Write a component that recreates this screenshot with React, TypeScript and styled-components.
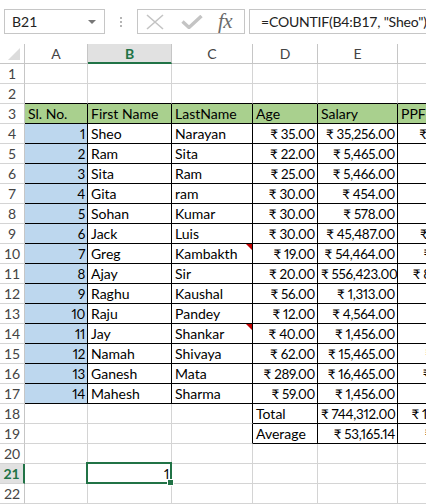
import styled, { createGlobalStyle } from 'styled-components';

const GlobalStyle = createGlobalStyle`
  html, body {
    margin: 0;
    padding: 0;
    background: #fff;
  }
  body {
    font-family: Lato, 'Liberation Sans', 'Noto Sans', sans-serif;
  }
`;

const GREEN = '#217346';
const GRID = '#d4d4d4';
const HEAD_LINE = '#c6c6c6';
const COLS = [63, 84, 81, 65, 80, 86];
const LETTERS = ['A', 'B', 'C', 'D', 'E', 'F'];
const ROW_COUNT = 22;
const SELECTED_ROW = 21;
const SELECTED_COL = 2;

type Cell = { v: string; num?: boolean; fill?: string; note?: boolean };

const people: [number, string, string, number, number][] = [
  [1, 'Sheo', 'Narayan', 35, 35256],
  [2, 'Ram', 'Sita', 22, 5465],
  [3, 'Sita', 'Ram', 25, 5466],
  [4, 'Gita', 'ram', 30, 454],
  [5, 'Sohan', 'Kumar', 30, 578],
  [6, 'Jack', 'Luis', 30, 45487],
  [7, 'Greg', 'Kambakth', 19, 54464],
  [8, 'Ajay', 'Sir', 20, 556423],
  [9, 'Raghu', 'Kaushal', 56, 1313],
  [10, 'Raju', 'Pandey', 12, 4564],
  [11, 'Jay', 'Shankar', 40, 1456],
  [12, 'Namah', 'Shivaya', 62, 15465],
  [13, 'Ganesh', 'Mata', 289, 16465],
  [14, 'Mahesh', 'Sharma', 59, 1456]
];

const money = (n: number) => {
  const [int, dec] = n.toFixed(2).split('.');
  return '₹ ' + int.replace(/\B(?=(\d{3})+(?!\d))/g, ',') + '.' + dec;
};

const notes = ['Kambakth', 'Shankar'];

const buildRows = (): Record<number, Record<number, Cell>> => {
  const rows: Record<number, Record<number, Cell>> = {};
  const head = ['Sl. No.', 'First Name', 'LastName', 'Age', 'Salary', 'PPF'];
  rows[3] = {};
  head.forEach((h, i) => (rows[3][i + 1] = { v: h, fill: '#a9d08e' }));
  people.forEach((p, i) => {
    rows[4 + i] = {
      1: { v: String(p[0]), num: true, fill: '#bdd7ee' },
      2: { v: p[1] },
      3: { v: p[2], note: notes.includes(p[2]) },
      4: { v: money(p[3]), num: true },
      5: { v: money(p[4]), num: true },
      6: { v: money(p[4] * 0.15), num: true }
    };
  });
  const total = people.reduce((s, p) => s + p[4], 0);
  rows[18] = {
    4: { v: 'Total' },
    5: { v: money(total), num: true },
    6: { v: money(total * 0.15), num: true }
  };
  rows[19] = {
    4: { v: 'Average' },
    5: { v: money(total / people.length), num: true },
    6: { v: money((total * 0.15) / people.length), num: true }
  };
  rows[21] = { 2: { v: '1', num: true } };
  return rows;
};

const bordered = (r: number, c: number) =>
  (r >= 3 && r <= 17 && c >= 1 && c <= 6) || (r >= 18 && r <= 19 && c >= 4 && c <= 6);

const App = () => {
  const rows = buildRows();
  const lines = Array.from({ length: ROW_COUNT }, (_, i) => i + 1);

  return (
    <>
      <GlobalStyle />
      <Window>
        <FormulaBar>
          <NameBox>
            B21
            <DropArrow />
          </NameBox>
          <Grip>
            <i />
            <i />
            <i />
          </Grip>
          <ActionBox>
            <svg width='20' height='16' viewBox='0 0 20 16'>
              <path d='M2 1 L18 15 M18 1 L2 15' stroke='#c4c4c4' strokeWidth='1.6' fill='none' />
            </svg>
            <svg width='22' height='14' viewBox='0 0 22 14'>
              <path d='M1.5 6.5 L8 12.5 L20.5 1' stroke='#c4c4c4' strokeWidth='3.4' fill='none' />
            </svg>
            <Fx>fx</Fx>
          </ActionBox>
          <FormulaInput>=COUNTIF(B4:B17, "Sheo")</FormulaInput>
        </FormulaBar>

        <Sheet>
          <Corner>
            <svg width='12' height='12' viewBox='0 0 12 12'>
              <path d='M12 0 L12 12 L0 12 Z' fill='#dcdcdc' />
            </svg>
          </Corner>
          {LETTERS.map((l, i) => (
            <ColHead key={l} $active={i + 1 === SELECTED_COL}>
              {l}
            </ColHead>
          ))}

          {lines.map((r) => (
            <Row key={r}>
              <RowHead $active={r === SELECTED_ROW}>{r}</RowHead>
              {COLS.map((_, ci) => {
                const c = ci + 1;
                const cell = rows[r]?.[c];
                const right = bordered(r, c) || bordered(r, c + 1) ? '#000' : GRID;
                const bottom = bordered(r, c) || bordered(r + 1, c) ? '#000' : GRID;
                const selected = r === SELECTED_ROW && c === SELECTED_COL;
                return (
                  <DataCell
                    key={c}
                    $right={right}
                    $bottom={bottom}
                    $fill={cell?.fill}
                    $selected={selected}
                  >
                    <CellText $num={cell?.num}>{cell?.v}</CellText>
                    {cell?.note && <NoteMark />}
                    {selected && (
                      <Selection>
                        <FillHandle />
                      </Selection>
                    )}
                  </DataCell>
                );
              })}
            </Row>
          ))}
        </Sheet>
      </Window>
    </>
  );
};

export default App;

const Window = styled.div`
  width: 426px;
  height: 504px;
  overflow: hidden;
  background: #fff;
  color: #000;
`;

const FormulaBar = styled.div`
  height: 44px;
  display: flex;
  align-items: flex-start;
  padding: 9px 0 0 4px;
  box-sizing: border-box;
`;

const NameBox = styled.div`
  position: relative;
  width: 101px;
  height: 25px;
  box-sizing: border-box;
  border: 1px solid ${HEAD_LINE};
  padding-left: 7px;
  font-size: 14px;
  line-height: 23px;
  color: #222;
`;

const DropArrow = styled.span`
  position: absolute;
  right: 8px;
  top: 10px;
  width: 0;
  height: 0;
  border-left: 4px solid transparent;
  border-right: 4px solid transparent;
  border-top: 4px solid #777;
`;

const Grip = styled.div`
  width: 32px;
  height: 25px;
  display: flex;
  flex-direction: column;
  align-items: center;
  justify-content: center;
  gap: 2px;

  i {
    width: 2px;
    height: 2px;
    background: #b5b5b5;
  }
`;

const ActionBox = styled.div`
  width: 108px;
  height: 25px;
  box-sizing: border-box;
  border: 1px solid ${HEAD_LINE};
  display: flex;
  align-items: center;
  padding-left: 7px;
  gap: 16px;
`;

const Fx = styled.span`
  font-family: 'Liberation Serif', 'DejaVu Serif', serif;
  font-style: italic;
  font-size: 21px;
  color: #6b6b6b;
  margin-left: -1px;
  letter-spacing: -0.5px;
`;

const FormulaInput = styled.div`
  flex: 1;
  margin-left: 4px;
  height: 25px;
  box-sizing: border-box;
  border: 1px solid ${HEAD_LINE};
  border-right: none;
  padding-left: 11px;
  font-size: 14px;
  letter-spacing: -0.2px;
  line-height: 23px;
  color: #222;
  white-space: nowrap;
  overflow: hidden;
`;

const Sheet = styled.div`
  display: grid;
  grid-template-columns: 25px ${COLS.map((w) => w + 'px').join(' ')};
  grid-auto-rows: 20px;
  width: max-content;
`;

const Row = styled.div`
  display: contents;
`;

const Corner = styled.div`
  box-sizing: border-box;
  border-right: 1px solid ${HEAD_LINE};
  border-bottom: 1px solid ${HEAD_LINE};
  display: flex;
  align-items: flex-end;
  justify-content: flex-end;
  padding: 0 4px 3px 0;
`;

const ColHead = styled.div<{ $active?: boolean }>`
  box-sizing: border-box;
  border-right: 1px solid ${HEAD_LINE};
  border-bottom: ${(p) => (p.$active ? `2px solid ${GREEN}` : `1px solid ${HEAD_LINE}`)};
  background: ${(p) => (p.$active ? '#e1e1e1' : '#fff')};
  color: ${(p) => (p.$active ? GREEN : '#444')};
  font-weight: ${(p) => (p.$active ? 700 : 400)};
  font-size: 14px;
  text-align: center;
  line-height: 19px;
`;

const RowHead = styled.div<{ $active?: boolean }>`
  box-sizing: border-box;
  border-right: ${(p) => (p.$active ? `2px solid ${GREEN}` : `1px solid ${HEAD_LINE}`)};
  border-bottom: 1px solid ${GRID};
  background: ${(p) => (p.$active ? '#e1e1e1' : '#fff')};
  color: ${(p) => (p.$active ? GREEN : '#444')};
  font-weight: ${(p) => (p.$active ? 700 : 400)};
  font-size: 14px;
  text-align: center;
  line-height: 20px;
`;

const DataCell = styled.div<{ $right: string; $bottom: string; $fill?: string; $selected?: boolean }>`
  position: relative;
  z-index: ${(p) => (p.$selected ? 2 : 'auto')};
  box-sizing: border-box;
  border-right: 1px solid ${(p) => p.$right};
  border-bottom: 1px solid ${(p) => p.$bottom};
  background: ${(p) => p.$fill ?? '#fff'};
  min-width: 0;
`;

const CellText = styled.div<{ $num?: boolean }>`
  padding: 0 ${(p) => (p.$num ? '2px' : '3px')} 0 3px;
  font-size: ${(p) => (p.$num ? '13.4px' : '14px')};
  line-height: 20px;
  white-space: nowrap;
  overflow: hidden;
  text-align: ${(p) => (p.$num ? 'right' : 'left')};
  direction: ${(p) => (p.$num ? 'rtl' : 'ltr')};
  unicode-bidi: plaintext;
  font-variant-numeric: proportional-nums;
  letter-spacing: ${(p) => (p.$num ? '-0.3px' : '0')};
`;

const NoteMark = styled.span`
  position: absolute;
  top: 0;
  right: 0;
  width: 0;
  height: 0;
  border-top: 6px solid #c00000;
  border-left: 6px solid transparent;
`;

const Selection = styled.span`
  position: absolute;
  inset: -2px -1px -1px -2px;
  border: 2px solid ${GREEN};
  pointer-events: none;
`;

const FillHandle = styled.span`
  position: absolute;
  right: -4px;
  bottom: -4px;
  width: 5px;
  height: 5px;
  background: ${GREEN};
  border: 1px solid #fff;
`;
